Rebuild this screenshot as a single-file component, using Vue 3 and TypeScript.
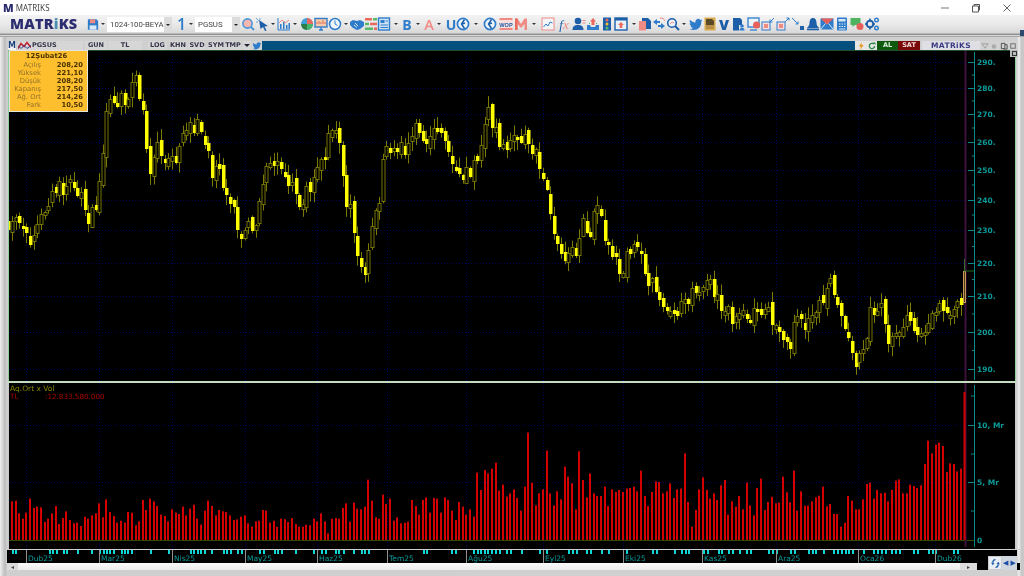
<script setup lang="ts">
type Tool = { cx: number; icon?: string; w?: number };

const B = '#2f7ccb';
const N = '#1d5ea8';
const P = '#f08a84';
const ICONS: Record<string, string> = {
  save: `<path d="M1 1h10l2 2v10H1z" fill="${B}"/><rect x="3.5" y="1" width="6" height="4.5" fill="${P}"/><rect x="3" y="8" width="8" height="5" fill="#d9e8f8"/>`,
  search: `<circle cx="6.5" cy="6.5" r="4.6" fill="#f7b7b0" stroke="#4c96d8" stroke-width="1.6"/><path d="M10 10l3 3" stroke="#4c96d8" stroke-width="2"/>`,
  cursor: `<path d="M4 3l9 6-3.500.5 2 4-1.500.5-2-4L5.500 12z" fill="${N}"/><path d="M1 1l3 3M1 5h2M5 1v2" stroke="#6aa8e0"/>`,
  bars: `<path d="M1 1v12h12" stroke="${B}" fill="none"/><path d="M3 12V7h1.5v5zM6 12V4h1.5v8zM9 12V8h1.5v4zM11.5 12V6H13v6z" fill="${B}"/><path d="M2 6l3-3 3 3 4-3" stroke="${P}" fill="none"/>`,
  pie: `<circle cx="7" cy="7" r="6" fill="#3f9fd8"/><path d="M7 7V1a6 6 0 0 1 6 6z" fill="#e86a5f"/><path d="M7 7h6a6 6 0 0 1-6 6z" fill="#47b56a"/><path d="M7 7v6a6 6 0 0 1-6-6z" fill="#2e7d46"/>`,
  monitor: `<rect x="1" y="1.5" width="12" height="8.5" fill="#f6c9a8" stroke="${B}" stroke-width="1.4"/><path d="M3 7V5M5 7V4M7 7V5M9 7V3M11 7V5" stroke="#d8705f"/><path d="M5 13h4M7 10v3" stroke="${B}" stroke-width="1.4"/>`,
  clock: `<circle cx="7" cy="7" r="5.5" fill="#eef6fc" stroke="${B}" stroke-width="1.5"/><path d="M7 3.5V7l2.5 1.5" stroke="${B}" fill="none"/>`,
  hands: `<path d="M0 5l3-2 4 1 3-1 4 2v4l-4 3-3 1-4-2-3-3z" fill="${B}"/><path d="M5 6l3 3M4 8l3 2.5" stroke="#cfe3f7"/>`,
  list: `<rect x="1" y="1" width="7" height="2.5" fill="#e86a5f"/><rect x="9" y="1" width="4" height="2.5" fill="#57b86a"/><rect x="1" y="5.7" width="4" height="2.5" fill="#57b86a"/><rect x="6" y="5.7" width="7" height="2.5" fill="#e86a5f"/><rect x="1" y="10.5" width="8" height="2.5" fill="#57b86a"/><rect x="10" y="10.5" width="3" height="2.5" fill="#e86a5f"/>`,
  doc: `<rect x="1.5" y="1" width="11" height="12" fill="#cfe3f7" stroke="${B}" stroke-width="1.4"/><rect x="3.5" y="3" width="4" height="3" fill="${B}"/><path d="M8.5 4h2.5M3.5 8h7.5M3.5 10.5h7.5" stroke="${B}"/>`,
  b: `<text x="7" y="12.5" text-anchor="middle" font-family="Open Sans" font-weight="700" font-size="14" fill="${B}">B</text>`,
  a: `<text x="7" y="12.5" text-anchor="middle" font-family="Open Sans" font-weight="600" font-size="14.5" fill="${P}">A</text>`,
  u: `<text x="7" y="12.5" text-anchor="middle" font-family="Open Sans" font-weight="700" font-size="14" fill="${B}">U</text>`,
  r1: `<circle cx="7" cy="7" r="5.6" fill="#eef6fc" stroke="${B}" stroke-width="1.7"/><path d="M8.5 2.5L5.5 7l3 4.5M6 7l3-1" stroke="${N}" stroke-width="1.5" fill="none"/>`,
  wop: `<rect x="0.5" y="1" width="13" height="12" fill="#f9dedb"/><rect x="0.5" y="1" width="13" height="2" fill="${P}"/><rect x="0.5" y="11" width="13" height="2" fill="${P}"/><text x="7" y="9.5" text-anchor="middle" font-family="Liberation Sans" font-weight="700" font-size="5.6" fill="${N}">WOP</text>`,
  m: `<path d="M1 13V1.5h2.5L7 7l3.5-5.500H13V13h-2.500V7L7 11 3.500 7v6z" fill="${P}"/><path d="M1 13V1.500h2.500V13z" fill="#e86a5f"/>`,
  chart: `<rect x="1" y="1" width="12" height="12" fill="#f2f6fa" stroke="${P}"/><path d="M2.500 10l2.500-3 2 2 2-4 2.500 1" stroke="${B}" fill="none"/>`,
  fx: `<text x="7" y="11.500" text-anchor="middle" font-family="Liberation Serif" font-style="italic" font-size="13" fill="${N}">f<tspan fill="${P}">x</tspan></text>`,
  person: `<circle cx="6" cy="4" r="3.300" fill="${N}"/><path d="M0.500 13c0-4 2.500-5 5.500-5s5.500 1 5.500 5z" fill="${N}"/><path d="M10.500 3.500h3M10.500 6h3" stroke="${P}"/>`,
  inbox: `<path d="M1 8h3l1 2h4l1-2h3v5H1z" fill="${B}"/><path d="M5.500 8V4.500H4L7 1l3 3.500H8.500V8z" fill="#e86a5f"/><path d="M3 6l1 1M11 6l-1 1" stroke="#57b86a"/>`,
  light: `<rect x="3" y="0.500" width="8" height="13" fill="${N}"/><circle cx="7" cy="3" r="1.500" fill="#e86a5f"/><circle cx="7" cy="7" r="1.500" fill="#f2c12e"/><circle cx="7" cy="11" r="1.500" fill="#57b86a"/>`,
  boxup: `<rect x="1" y="1" width="12" height="12" fill="#e8f1fa" stroke="${N}" stroke-width="1.400"/><rect x="1" y="1" width="12" height="2.500" fill="${N}"/><path d="M7 5l3 3H8.300v3H5.700V8H4z" fill="#e86a5f"/>`,
  docs: `<path d="M4 1h6l3 3v8H4z" fill="${N}"/><path d="M1 4h7v9.500H1z" fill="${P}"/>`,
  arrows: `<path d="M1 5l4-3v2h3v2H5v2zM13 9l-4 3v-2H6V8h3V6z" fill="${B}"/><path d="M8 1c3 0 4 1 5 3" stroke="${P}" fill="none"/>`,
  search2: `<circle cx="6" cy="6" r="4.300" fill="#eaf3fb" stroke="${N}" stroke-width="1.600"/><path d="M9 9l4 4" stroke="${N}" stroke-width="2"/><path d="M4 7l2-2 2 1" stroke="${P}" fill="none"/>`,
  bird: `<path d="M13.500 3.200l-1.600.5c.6-.4 1-.9 1.200-1.500-.6.300-1.200.6-1.800.7a2.800 2.800 0 0 0-4.800 2.600C4.200 5.400 2.300 4.400 1 2.800c-.7 1.300-.3 2.900.9 3.700-.4 0-.9-.1-1.300-.3 0 1.300 1 2.500 2.300 2.800-.4.100-.8.100-1.300 0 .4 1.100 1.400 1.900 2.700 1.900A5.700 5.700 0 0 1 .5 12c5.600 3 12.200-.5 11.800-7.400.5-.4 1-.9 1.200-1.400z" fill="${B}"/>`,
  gold: `<rect x="1.500" y="0.500" width="11" height="13" fill="#d9a94e"/><path d="M3 2h6l2 2v8H3z" fill="#5a4a2a"/><rect x="3" y="8" width="8" height="4" fill="#b89048"/>`,
  v: `<text x="7" y="12.500" text-anchor="middle" font-family="Open Sans" font-weight="800" font-size="14.500" fill="${N}">V</text>`,
  dpeople: `<path d="M1 1h7l2 2v5H7v5.500H1z" fill="${N}"/><circle cx="10" cy="9" r="1.800" fill="${B}"/><path d="M7.500 13.500c0-2 1-2.500 2.500-2.500s2.500.5 2.500 2.500z" fill="${B}"/>`,
  monred: `<rect x="1" y="1" width="11" height="9" fill="#eaf3fb" stroke="${B}" stroke-width="1.300"/><path d="M3 13h7" stroke="${B}" stroke-width="1.300"/><circle cx="9.500" cy="8" r="3.500" fill="#e8605a"/>`,
  shrink: `<rect x="1" y="5" width="8" height="8" fill="#f9dedb" stroke="${B}"/><rect x="3" y="7" width="4" height="4" fill="${P}"/><path d="M13 1L9 5M9 2.500V5h2.500" stroke="${B}" fill="none"/>`,
  grow: `<rect x="1" y="5" width="8" height="8" fill="#f9dedb" stroke="${B}"/><rect x="3" y="7" width="4" height="4" fill="${P}"/><path d="M9 5l4-4M10.500 1H13v2.500" stroke="${B}" fill="none"/>`,
  arrow3: `<path d="M1 1l6 6M4.500 7H7V4.500" stroke="${B}" fill="none"/><rect x="9" y="9" width="4" height="4" fill="${N}"/>`,
  bell: `<path d="M7 1c2.500 0 3.500 2 3.500 5 0 2.500 1.500 3.500 2.500 5H1c1-1.500 2.500-2.500 2.500-5 0-3 1-5 3.500-5z" fill="${N}"/><rect x="1" y="11.500" width="12" height="1.800" fill="${N}"/>`,
  mail: `<rect x="0.500" y="1.500" width="13" height="11" fill="${B}"/><path d="M0.500 1.500h13L7 7.500z" fill="#e8605a"/><path d="M0.500 12.500L5.500 6.500M13.500 12.500l-5-6" stroke="#d9e8f8"/>`,
  calc: `<rect x="2" y="0.500" width="10" height="13" rx="1" fill="${B}"/><rect x="3.500" y="2" width="7" height="2.500" fill="#d9e8f8"/><path d="M4 7h1.500M6.500 7H8M9 7h1.500M4 9.500h1.500M6.500 9.500H8M9 9.500h1.500M4 12h6.500" stroke="#d9e8f8"/>`,
  chat: `<path d="M0.500 1h10v7H5L2.500 10V8h-2z" fill="#4fb45f"/><circle cx="10" cy="9.500" r="3.500" fill="#e8605a"/>`,
  gears: `<circle cx="5" cy="7" r="3.300" fill="none" stroke="${N}" stroke-width="2"/><circle cx="11.500" cy="3" r="1.800" fill="none" stroke="${B}" stroke-width="1.400"/><circle cx="11.500" cy="11" r="1.800" fill="none" stroke="${B}" stroke-width="1.400"/><path d="M5 1.500v1.500M5 11v1.500M0 7h1.500M8.500 7H10" stroke="${N}" stroke-width="1.500"/>`,
};

const RAW_TOOLS: [number, string?][] = [
  [248, 'search'], [263, 'cursor'], [273], [284, 'bars'], [295], [306, 'pie'], [320, 'monitor'], [336, 'clock'], [346],
  [356, 'hands'], [371, 'list'], [385, 'doc'], [396], [407, 'b'], [418], [429, 'a'], [439], [450, 'u'], [464, 'r1'], [475],
  [489, 'r1'], [507, 'wop'], [522, 'm'], [533], [547, 'chart'], [566, 'fx'], [578, 'person'], [593, 'inbox'], [607, 'light'],
  [622, 'boxup'], [634], [644, 'docs'], [658, 'arrows'], [674, 'search2'], [684], [695, 'bird'], [710, 'gold'], [724, 'v'],
  [739, 'dpeople'], [754, 'monred'], [768, 'shrink'], [783, 'grow'], [797, 'arrow3'], [813, 'bell'], [827, 'mail'],
  [842, 'calc'], [857, 'chat'], [872, 'gears'],
];
const tools: Tool[] = RAW_TOOLS.map(([cx, icon], i) => {
  const prev = i ? RAW_TOOLS[i - 1][0] : 241 * 2 - cx;
  const next = i < RAW_TOOLS.length - 1 ? RAW_TOOLS[i + 1][0] : cx + 14;
  return { cx, icon, w: (next - prev) / 2 };
});

const VOL1 = [432,392,390,428,444,426,384,412,408,410,454,444,428,406,460,442,422,448,458,456,466,438,444,434,428,398,440,386,424,436,456,450,456,424,426,464,452,388,418,384,392,406,432,436,452,416,426,430,408,434,414,402,444,462,420,390,406,434,418,422,424,434,448,446,438,434,458,468,452,450,418,420,456,450,468,444,446,454,442,460,468,468,462,464,444,452,428,452,488,444,442,444].map((t) => (508 - t) / 3);
const VOL2 = [247,233,288,231,249,251,243,162,225,275,279,207,235,219,285,275,293,291,288,223,241,267,223,215,261,217,219,261,215,223,255,283,229,243,267,251,273,141,193,133,143,129,111,195,177,213,203,191,217,255,183,21,171,239,203,191,75,203,239,197,221,123,153,173,251,77,163,215,143,203,211,211,183,241,191,199,193,199,189,187,183,197,135,211,241,199,167,169,203,197,173,217,191,189,83,229,303,253,191,155,193,219,203,223,179,163,267,227,243,211,251,171,239,269,187,159,253,229,213,233,231].map((t) => (343 - t) / 3);
const VOL3 = [318,365,395,300,420,362,405,405,392,380,375,348,407,400,430,430,468,456,376,390,416,416,386,340,336,384,358,368,366,392,358,330,326,368,368,342,346,352,344,280,210,248,222,216,226,304,278,280,302,294,68].map((t) => (508 - t) / 3);
const vols = [...VOL1, ...VOL2, ...VOL3];
const n = vols.length;
const barX = (i: number) => 8.3 + (i * (964.7 - 8.3)) / (n - 1);
const volBars = vols.map((h, i) => ({ x: Math.round(barX(i)) - 1, y: 540 - h, h }));

const PATH: [number, number][] = [[10,225],[15,220],[22,218],[30,250],[33,245],[40,208],[48,205],[55,190],[65,185],[72,183],[80,195],[88,222],[95,205],[100,175],[105,125],[112,100],[120,100],[128,95],[135,85],[140,100],[145,130],[150,170],[155,150],[165,150],[175,165],[185,125],[192,120],[200,120],[205,140],[212,170],[220,175],[228,190],[235,205],[240,245],[248,225],[255,235],[262,185],[268,160],[275,165],[285,178],[292,185],[300,200],[305,195],[312,190],[320,165],[325,150],[333,130],[340,150],[345,200],[350,210],[355,240],[360,262],[365,275],[370,225],[378,205],[385,150],[395,148],[405,150],[415,125],[425,140],[435,125],[445,140],[455,170],[462,175],[470,160],[480,140],[490,110],[498,150],[505,148],[515,140],[525,135],[535,150],[545,180],[550,220],[555,240],[562,255],[570,262],[578,255],[582,225],[590,225],[598,210],[605,240],[612,255],[620,275],[628,250],[635,245],[642,260],[650,285],[660,300],[668,315],[675,305],[682,305],[690,295],[700,285],[712,283],[720,310],[730,320],[740,315],[750,315],[765,315],[775,325],[790,345],[795,325],[810,320],[820,300],[830,285],[838,310],[848,330],[855,360],[865,340],[870,310],[880,310],[888,340],[900,325],[910,320],[920,335],[930,325],[940,300],[950,310],[958,305],[965,300]];
function py(x: number): number {
  for (let i = 1; i < PATH.length; i++) {
    if (x <= PATH[i][0]) {
      const [a, b] = PATH[i - 1];
      const [c, d] = PATH[i];
      return b + ((x - a) / (c - a)) * (d - b);
    }
  }
  return PATH[PATH.length - 1][1];
}
let seed = 4217;
const rnd = () => {
  seed = (seed * 16807) % 2147483647;
  return seed / 2147483647;
};
let prev = 225;
const candles = Array.from({ length: n - 1 }, (_, i) => {
  const x = Math.round(barX(i));
  const o = prev + (rnd() - 0.5) * 9;
  let c = py(barX(i)) + (rnd() - 0.5) * 17;
  if (Math.abs(c - o) < 3) c = o + (rnd() > 0.5 ? 1 : -1) * (2 + rnd() * 7);
  prev = c;
  const top = Math.round(Math.min(o, c));
  const bottom = Math.round(Math.max(o, c));
  return { x, top, h: Math.max(3, bottom - top), up: c < o, wt: top - 1 - rnd() * 10, wb: bottom + 1 + rnd() * 10 };
});

const priceTicks = [[290,62],[280,88],[270,114],[260,142],[250,170],[240,200],[230,230],[220,263],[210,296],[200,332],[190,369]];
const minorTicks = priceTicks.slice(0, -1).map(([, y], i) => (y + priceTicks[i + 1][1]) / 2);
const gridX = [26, 99, 172, 245, 317, 387, 466, 543, 623, 702, 776, 858, 935];
const months = ['Dub25','Mar25','Nis25','May25','Haz25','Tem25','Ağu25','Eyl25','Eki25','Kas25','Ara25','Oca26','Dub26'];
const dateTicks = [12,15,49,52,56,63,66,77,91,99,103,106,109,113,121,124,127,131,150,168,190,193,197,200,204,211,223,226,230,237,241,259,263,274,277,281,295,313,321,325,335,338,343,353,361,364,368,423,426,451,455,473,477,480,484,487,491,495,499,506,510,521,539,546,568,572,576,586,590,601,608,626,652,656,674,681,685,688,703,707,718,721,728,732,739,746,750,768,772,776,790,794,808,812,815,823,833,837,841,845,848,852,863,873,877,881,885,891,895,899,913,917,928,932,935,953,957];

const tabs = [
  { label: 'GUN', w: 22, ml: 2 }, { label: 'TL', w: 34, ml: 1 }, { label: 'LOG', w: 19, ml: 6 }, { label: 'KHN', w: 16, ml: 3 },
  { label: 'SVD', w: 16, ml: 3 }, { label: 'SYM', w: 15, ml: 3 }, { label: 'TMP', w: 16, ml: 2 },
];
const info = [['Açılış','208,20'],['Yüksek','221,10'],['Düşük','208,20'],['Kapanış','217,50'],['Ağ. Ort','214,26'],['Fark','10,50']];
</script>

<template>
  <div class="app">
    <header class="titlebar">
      <span class="tlogo">M</span>
      <span class="ttext">MATRIKS</span>
      <span class="winbtns">
        <svg viewBox="0 0 10 10" class="wb"><path d="M1 5h8" stroke="#777" /></svg>
        <svg viewBox="0 0 10 10" class="wb"><path d="M1.500 3h6v6h-6zM3 3V1.500h5.500V7H7.500" stroke="#555" fill="none" /></svg>
        <svg viewBox="0 0 10 10" class="wb"><path d="M1.500 1.500l7 7M8.500 1.500l-7 7" stroke="#666" /></svg>
      </span>
    </header>

    <nav class="toolbar">
      <span class="logo">MATR<b>i</b>KS</span>
      <svg class="ico save" viewBox="0 0 14 14" v-html="ICONS.save"></svg>
      <i class="caret c1"></i>
      <span class="combo combo-a"><span class="ctext">1024-100-BEYA</span><i class="dd"></i></span>
      <span class="one">1</span>
      <i class="caret c2"></i>
      <span class="combo combo-b"><span class="ctext">PGSUS</span><i class="dd"></i></span>
      <div class="tools">
        <span v-for="t in tools" :key="t.cx" class="slot" :style="{ width: t.w + 'px' }">
          <svg v-if="t.icon" class="ico" viewBox="0 0 14 14" v-html="ICONS[t.icon]"></svg>
          <i v-else class="caret"></i>
        </span>
      </div>
      <i class="corner"></i>
    </nav>
    <div class="sep"></div>

    <main class="workspace">
      <div class="winhead">
        <span class="mbtn">M</span>
        <svg class="flag" viewBox="0 0 13 8"><rect width="13" height="8" fill="#d8d8d8" /><path d="M0 7l3-5 3 3 3-4 4 5" stroke="#c0202a" stroke-width="1.500" fill="none" /><path d="M0 4l3 3 3-3 3 3 4-3" stroke="#2a3f8f" fill="none" /></svg>
        <span class="cell sym">PGSUS</span>
        <span v-for="t in tabs" :key="t.label" class="cell" :style="{ width: t.w + 'px', marginLeft: t.ml + 'px' }">{{ t.label }}</span>
        <span class="cell drop"><i></i></span>
        <svg class="birdh" viewBox="0 0 14 14" v-html="ICONS.bird"></svg>
        <span class="bluebar"></span>
        <span class="flash"><svg viewBox="0 0 8 9"><path d="M5 0L1.500 5H4L3 9l4-5.500H4.500z" fill="#e89a1a" /></svg></span>
        <span class="flash"><svg viewBox="0 0 9 9"><path d="M7.500 4.500a3 3 0 1 1-1-2.300" stroke="#2a8a4a" stroke-width="1.500" fill="none" /><path d="M5.500 0.500h3v3z" fill="#2a8a4a" /></svg></span>
        <span class="al">AL</span>
        <span class="sat">SAT</span>
        <span class="mat">MATRiKS</span>
        <span class="mini"><svg viewBox="0 0 9 9"><path d="M1 2h7L4.500 7z" fill="none" stroke="#999" /></svg></span>
        <span class="mini"><svg viewBox="0 0 9 9"><circle cx="4.500" cy="5" r="2.500" fill="#aaa" /></svg></span>
        <span class="mini"><svg viewBox="0 0 9 9"><path d="M1.500 1.500h4v6h-4zM5.500 3h2.500v5h-4" fill="none" stroke="#444" /></svg></span>
        <span class="mini"><svg viewBox="0 0 9 9"><rect x="2" y="2" width="5" height="5" fill="none" stroke="#666" /></svg></span>
      </div>

      <section class="panel price">
        <svg class="chart" viewBox="8 50 1008 332" width="1008" height="332">
          <rect x="8" y="50" width="1008" height="332" fill="#000" />
          <g class="grid">
            <line v-for="x in gridX" :key="x" :x1="x + 0.5" :x2="x + 0.5" y1="50" y2="381" />
            <line v-for="p in priceTicks" :key="p[0]" x1="9" x2="965" :y1="p[1] + 0.5" :y2="p[1] + 0.5" />
          </g>
          <g v-for="(c, i) in candles" :key="i">
            <line class="wick" :x1="c.x + 0.5" :x2="c.x + 0.5" :y1="c.wt" :y2="c.wb" />
            <rect v-if="c.up" class="hollow" :x="c.x - 1" :y="c.top + 0.5" width="3" :height="c.h" />
            <rect v-else class="solid" :x="c.x - 1" :y="c.top" width="3.500" :height="c.h" />
          </g>
          <line class="purple" x1="965.500" x2="965.500" y1="50" y2="381" />
          <line class="lastwick" x1="964.500" x2="964.500" y1="259" y2="271" />
          <rect class="lastbody" x="963.500" y="271.500" width="2" height="31" />
          <line class="lasttick" x1="964" x2="974" y1="271" y2="271" />
          <line class="axis" x1="974.500" x2="974.500" y1="52" y2="380" />
          <line v-for="y in minorTicks" :key="y" class="axis" x1="972" x2="974" :y1="y" :y2="y" />
          <g v-for="p in priceTicks" :key="'t' + p[0]">
            <line class="axis" x1="968" x2="974" :y1="p[1] + 0.5" :y2="p[1] + 0.5" />
            <text class="alabel" x="977" :y="p[1] + 3">{{ p[0] }}.</text>
          </g>
          <line class="edge" x1="1015.500" x2="1015.500" y1="50" y2="381" />
          <line class="edge" x1="8.500" x2="8.500" y1="50" y2="381" />
          <line class="edge top" x1="8" x2="1016" y1="50" y2="50" />
          <line class="sepline" x1="8" x2="1016" y1="381.500" y2="381.500" />
        </svg>
        <div class="infobox">
          <div class="ihead">12Şubat26</div>
          <div v-for="r in info" :key="r[0]" class="irow"><span class="il">{{ r[0] }}</span><span class="iv">{{ r[1] }}</span></div>
        </div>
        <span class="sqbtn"><i></i></span>
      </section>

      <section class="panel volume">
        <svg class="chart" viewBox="8 383 1008 166" width="1008" height="166">
          <rect x="8" y="383" width="1008" height="166" fill="#000" />
          <g class="grid">
            <line v-for="x in gridX" :key="x" :x1="x + 0.5" :x2="x + 0.5" y1="383" y2="549" />
            <line x1="9" x2="965" y1="425.500" y2="425.500" />
            <line x1="9" x2="965" y1="482.500" y2="482.500" />
          </g>
          <line class="base" x1="8" x2="974" y1="540.500" y2="540.500" />
          <rect v-for="(b, i) in volBars" :key="i" class="vbar" :x="b.x" :y="b.y" width="2" :height="b.h" />
          <line class="purple" x1="965.500" x2="965.500" y1="383" y2="547" />
          <rect class="vbar" x="963.500" y="392" width="2" height="148" />
          <line class="axis" x1="974.500" x2="974.500" y1="385" y2="547" />
          <line class="axis" x1="968" x2="974" y1="425.500" y2="425.500" />
          <line class="axis" x1="968" x2="974" y1="482.500" y2="482.500" />
          <line class="axis" x1="971" x2="974" y1="454" y2="454" />
          <line class="axis" x1="971" x2="974" y1="511" y2="511" />
          <line class="axis" x1="971" x2="974" y1="396" y2="396" />
          <text class="alabel" x="977" y="428">10, Mr</text>
          <text class="alabel" x="977" y="485">5, Mr</text>
          <text class="alabel" x="977" y="543">0</text>
          <text class="vtitle" x="10" y="391">Aq.Ort x Vol</text>
          <text class="vred" x="10" y="399">TL</text>
          <text class="vred" x="45" y="399">:12.833.580.000</text>
          <line class="frame" x1="8.500" x2="8.500" y1="383" y2="549" />
          <line class="frame" x1="1015.500" x2="1015.500" y1="383" y2="549" />
        </svg>
      </section>

      <section class="dates">
        <svg class="chart" viewBox="7 550 1010 13" width="1010" height="13">
          <rect x="7" y="550" width="1010" height="13" fill="#000" />
          <rect v-for="x in dateTicks" :key="x" class="dtick" :x="x" y="550" width="2" height="4" />
          <g v-for="(x, i) in gridX" :key="x">
            <line class="dsep" :x1="x + 0.5" :x2="x + 0.5" y1="550" y2="563" />
            <text class="dlabel" :x="x + 2" y="561">{{ months[i] }}</text>
          </g>
        </svg>
        <div class="refreshbtn"><svg viewBox="0 0 12 12"><path d="M6 1c-2.500 0-4 2-3.500 4.500L1 5l2 3 2-2.500-1.200.2C3.500 4 4.500 2.500 6 2.500zM6 11c2.500 0 4-2 3.500-4.500L11 7 9 4 7 6.500l1.200-.2c.3 1.700-.7 3.200-2.200 3.200z" fill="#1d5ea8" /></svg></div>
        <div class="navbtns"><span class="na">◀</span><span class="na">▶</span></div>
      </section>

      <div class="scroll">
        <span class="sbtn first">◂</span>
        <span class="track"></span>
        <span class="sbtn last">▸</span>
        <span class="sblack"></span>
      </div>
    </main>
  </div>
</template>

<style scoped>
.app {
  width: 1024px;
  height: 576px;
  overflow: hidden;
  display: flex;
  flex-direction: column;
  background: #d6d6d6;
  filter: blur(0.4px);
  font-family: "DejaVu Sans", sans-serif;
}
.titlebar {
  height: 15px;
  flex: none;
  background: #fff;
  display: flex;
  align-items: center;
  padding-left: 3px;
}
.tlogo {
  font: 800 11px/15px "Open Sans", sans-serif;
  color: #2a2a6e;
  flex: none;
  margin-right: 2px;
}
.ttext {
  font: 8px/15px "Noto Sans", sans-serif;
  color: #444;
  letter-spacing: 0.1px;
}
.winbtns {
  margin-left: auto;
  display: flex;
  gap: 21px;
  padding-right: 12px;
}
.wb {
  width: 10px;
  height: 10px;
}
.toolbar {
  height: 18px;
  flex: none;
  display: flex;
  align-items: center;
  padding-left: 10px;
  background: linear-gradient(#f3f3f3, #e8e8e8 55%, #d8d8d8);
  position: relative;
}
.logo {
  width: 77px;
  font: 800 14.500px/18px "Open Sans", sans-serif;
  letter-spacing: 0.2px;
  color: #2c2c70;
  white-space: nowrap;
}
.logo b {
  color: #4a8fb0;
}
.ico {
  width: 14px;
  height: 14px;
  display: block;
  overflow: visible;
}
.save {
  width: 12px;
  height: 13px;
}
.caret {
  display: block;
  width: 0;
  height: 0;
  border-left: 2px solid transparent;
  border-right: 2px solid transparent;
  border-top: 2px solid #333;
}
.c1 {
  margin: 0 2px;
}
.combo {
  height: 15px;
  background: #fff;
  display: flex;
  align-items: center;
  justify-content: space-between;
  overflow: hidden;
}
.combo-a {
  width: 65px;
}
.combo-b {
  width: 45px;
}
.ctext {
  font: 7.800px/15px Roboto, sans-serif;
  color: #444;
  padding-left: 3px;
  white-space: nowrap;
  flex: 1;
}
.dd {
  width: 8px;
  height: 15px;
  flex: none;
  background: #dcdcdc;
  position: relative;
}
.dd::after {
  content: "";
  position: absolute;
  left: 2px;
  top: 7px;
  border-left: 2px solid transparent;
  border-right: 2px solid transparent;
  border-top: 2px solid #222;
}
.one {
  width: 15px;
  text-align: center;
  margin-left: 2px;
  font: 600 16px/18px "Open Sans", sans-serif;
  color: #2f7ccb;
}
.c2 {
  margin: 0 2px 0 0;
}
.tools {
  display: flex;
  align-items: center;
  margin-left: 1px;
}
.slot {
  display: flex;
  justify-content: center;
  align-items: center;
  flex: none;
}
.corner {
  position: absolute;
  right: 0;
  bottom: -3px;
  width: 4px;
  height: 6px;
  background: #2a4a70;
}
.sep {
  height: 4px;
  flex: none;
  background: linear-gradient(#b8b8b8 0 25%, #8f8f8f 25% 50%, #d8d8d8 50% 75%, #a6a6a6 75%);
}
.workspace {
  flex: 1;
  min-height: 0;
  padding: 4px 7px 0 7px;
  display: flex;
  flex-direction: column;
  background: linear-gradient(90deg, #efefef, #bcbcbc 5px, #cfcfcf 7px, #d0d0d0 1017px, #f0f0f0 1019px, #c8c8c8 1021px);
}
.winhead {
  height: 9px;
  flex: none;
  display: flex;
  align-items: stretch;
  font: 700 6.500px/9px "DejaVu Sans", sans-serif;
  color: #34344a;
  margin-right: -1px;
}
.mbtn {
  width: 8px;
  margin-left: 1px;
  background: #f4f4f4;
  color: #1d3f7a;
  text-align: center;
  font-size: 8px;
}
.flag {
  width: 13px;
  height: 9px;
  margin-left: 2px;
}
.cell {
  background: #d6d6d6;
  text-align: center;
  flex: none;
  box-sizing: border-box;
  line-height: 9px;
  white-space: nowrap;
}
.sym {
  width: 52px;
  text-align: left;
  padding-left: 1px;
}
.drop {
  width: 8px;
  margin-left: 2px;
  position: relative;
}
.drop i {
  position: absolute;
  left: 1px;
  top: 3px;
  border-left: 3px solid transparent;
  border-right: 3px solid transparent;
  border-top: 3px solid #223;
}
.birdh {
  width: 10px;
  height: 9px;
  margin-left: 1px;
  background: #d6d6d6;
}
.bluebar {
  flex: 1;
  background: #04507f;
}
.flash {
  width: 11px;
  background: #e6e6e6;
  display: flex;
  align-items: center;
  justify-content: center;
}
.flash svg {
  width: 8px;
  height: 8px;
}
.al {
  width: 21px;
  background: #0f5a0f;
  color: #d8f0d8;
  text-align: center;
}
.sat {
  width: 22px;
  background: #7a0a0a;
  color: #f6dcdc;
  text-align: center;
}
.mat {
  width: 58px;
  margin-left: 2px;
  background: #dedee4;
  color: #3a3a84;
  text-align: center;
  font-size: 7.500px;
  letter-spacing: 0.4px;
}
.mini {
  width: 9.500px;
  background: #d2d2d2;
  display: flex;
  align-items: center;
  justify-content: center;
}
.mini svg {
  width: 8px;
  height: 8px;
}
.panel {
  position: relative;
  flex: none;
}
.price {
  height: 332px;
  margin-right: -1px;
  margin-left: 1px;
}
.chart {
  display: block;
}
.volume {
  height: 167px;
  margin-left: 1px;
  margin-right: -1px;
  border-top: 1px solid #c4dcc0;
  box-sizing: border-box;
}
.dates {
  height: 14px;
  flex: none;
  position: relative;
  border-top: 1px solid #cfcfcf;
  box-sizing: border-box;
  margin-right: -3px;
}
.grid line {
  stroke: #00005c;
  stroke-width: 1;
  stroke-dasharray: 1 2;
}
.wick {
  stroke: #7c7c00;
  stroke-width: 1;
}
.hollow {
  fill: #000;
  stroke: #757500;
  stroke-width: 1;
}
.solid {
  fill: #ffff00;
}
.purple {
  stroke: #3c123c;
  stroke-width: 2;
}
.lastwick {
  stroke: #356b2b;
}
.lastbody {
  fill: #4a3a1a;
  stroke: #c89a5a;
}
.lasttick {
  stroke: #1f6b1f;
  stroke-width: 1;
}
.axis {
  stroke: #0a8a8a;
  stroke-width: 1;
}
.alabel {
  font: 700 7.500px "DejaVu Sans", sans-serif;
  fill: #0a9a9a;
}
.edge {
  stroke: #8fd09a;
}
.edge.top {
  stroke: #3f9a5a;
}
.sepline {
  stroke: #c4dcc0;
}
.frame {
  stroke: #c8c8c8;
}
.base {
  stroke: #2c4a00;
}
.vbar {
  fill: #d40000;
}
.vtitle {
  font: 7.500px "DejaVu Sans", sans-serif;
  fill: #8a8a00;
}
.vred {
  font: 7.200px "DejaVu Sans", sans-serif;
  fill: #b00000;
}
.dtick {
  fill: #0fd6d6;
}
.dsep {
  stroke: #909090;
}
.dlabel {
  font: 7.500px "DejaVu Sans", sans-serif;
  fill: #0a9a9a;
}
.infobox {
  position: absolute;
  left: 1px;
  top: 0;
  width: 73px;
  padding: 1px 4px 2px 0;
  background: #fdbf2e;
  border: 1px solid #e4e4e4;
  font: 6.800px/8px "DejaVu Sans", sans-serif;
}
.ihead {
  text-align: center;
  font-weight: 700;
  color: #4a3300;
  height: 9px;
  line-height: 9px;
}
.irow {
  display: flex;
  justify-content: space-between;
  height: 8px;
}
.il {
  width: 31px;
  text-align: right;
  color: #94702a;
}
.iv {
  font-weight: 700;
  color: #4a3300;
}
.sqbtn {
  position: absolute;
  right: 0;
  top: 0;
  width: 8px;
  height: 7px;
  background: #bbb;
  display: flex;
  align-items: center;
  justify-content: center;
}
.sqbtn i {
  width: 3px;
  height: 3px;
  border: 1px solid #333;
}
.refreshbtn {
  position: absolute;
  left: 981px;
  top: 6px;
  width: 14px;
  height: 14px;
  background: #e8eef4;
  border: 1px solid #ccc;
  box-sizing: border-box;
  display: flex;
  align-items: center;
  justify-content: center;
  z-index: 1;
}
.refreshbtn svg {
  width: 11px;
  height: 11px;
}
.navbtns {
  position: absolute;
  left: 995px;
  top: 6px;
  display: flex;
  width: 15px;
  height: 14px;
  background: #cfd6de;
  z-index: 1;
}
.na {
  font: 7px/14px "DejaVu Sans", sans-serif;
  color: #1d4fa8;
  width: 7.500px;
  text-align: center;
}
.scroll {
  height: 7px;
  flex: none;
  display: flex;
  margin-right: -3px;
}
.sbtn {
  width: 11px;
  background: #dcdcdc;
  font: 6px/7px "DejaVu Sans", sans-serif;
  color: #444;
  text-align: center;
}
.sbtn.last {
  width: 17px;
}
.track {
  flex: 1;
  background: linear-gradient(#fafafa, #ececec);
}
.sblack {
  width: 43px;
  background: #000;
}
</style>
